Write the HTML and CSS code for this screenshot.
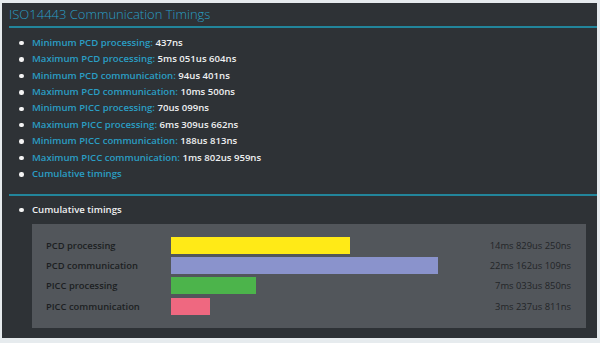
FILE: index.html
```html
<html>
  <head>
    <title>ISO14443 Communication Timings</title>
    <link rel="stylesheet" href="styles.css">
  </head>
  <body>
    <div class="panel">
      <h1 class="title">ISO14443 Communication Timings</h1>
      <ul class="stats">
        <li><span class="key">Minimum PCD processing:</span> 437ns</li>
        <li><span class="key">Maximum PCD processing:</span> 5ms 051us 604ns</li>
        <li><span class="key">Minimum PCD communication:</span> 94us 401ns</li>
        <li><span class="key">Maximum PCD communication:</span> 10ms 500ns</li>
        <li><span class="key">Minimum PICC processing:</span> 70us 099ns</li>
        <li><span class="key">Maximum PICC processing:</span> 6ms 309us 662ns</li>
        <li><span class="key">Minimum PICC communication:</span> 188us 813ns</li>
        <li><span class="key">Maximum PICC communication:</span> 1ms 802us 959ns</li>
        <li><span class="key">Cumulative timings</span></li>
      </ul>
      <section class="cumulative">
        <ul class="stats sub">
          <li>Cumulative timings</li>
        </ul>
        <div class="chart">
          <span class="label">PCD processing</span>
          <div class="track"><div class="bar yellow" style="width: 66.9%"></div></div>
          <span class="value">14ms 829us 250ns</span>

          <span class="label">PCD communication</span>
          <div class="track"><div class="bar lavender" style="width: 100%"></div></div>
          <span class="value">22ms 162us 109ns</span>

          <span class="label">PICC processing</span>
          <div class="track"><div class="bar green" style="width: 31.7%"></div></div>
          <span class="value">7ms 033us 850ns</span>

          <span class="label">PICC communication</span>
          <div class="track"><div class="bar pink" style="width: 14.6%"></div></div>
          <span class="value">3ms 237us 811ns</span>
        </div>
      </section>
    </div>
  </body>
</html>
```

FILE: styles.css
```css
body {
  margin: 0;
  background-color: #e6ebee;
  font-family: "Open Sans", "Noto Sans", sans-serif;
}
.panel {
  margin: 3px 3px 0 2px;
  height: 335px;
  background-color: #2e3236;
  overflow: hidden;
}
.title {
  margin: 0 0 0 7px;
  height: 23px;
  line-height: 23px;
  font-size: 13px;
  font-weight: 300;
  color: #2a9ec4;
  border-bottom: 2px solid #22859b;
}
.stats {
  list-style: none;
  margin: 6.8px 0 11.6px 0;
  padding: 0 0 0 17px;
}
.stats li {
  height: 16.4px;
  line-height: 16.4px;
  font-size: 9.6px;
  font-weight: 600;
  color: #eef0f1;
  white-space: nowrap;
}
.stats li::before {
  content: "";
  display: inline-block;
  width: 4.5px;
  height: 4.5px;
  border-radius: 50%;
  background-color: #f4f4f4;
  margin-right: 8.5px;
  vertical-align: middle;
}
.stats .key { color: #2a9ec4; }
.cumulative {
  margin-left: 7px;
  border-top: 2px solid #22859b;
}
.stats.sub {
  margin: 5.8px 0 5.8px 0;
  padding-left: 10px;
}
.chart {
  display: grid;
  grid-template-columns: 125px 267px 1fr;
  row-gap: 3.3px;
  align-items: center;
  margin: 0 11px 0 23px;
  padding: 13px 15px 13px 14px;
  background-color: #52565b;
  font-size: 9.4px;
}
.label {
  font-weight: 600;
  color: #1c1f22;
}
.value {
  text-align: right;
  color: #222528;
}
.track { height: 17px; }
.bar { height: 100%; }
.yellow { background-color: #ffea17; }
.lavender { background-color: #8a93cc; }
.green { background-color: #4cb44b; }
.pink { background-color: #ef6880; }
```
